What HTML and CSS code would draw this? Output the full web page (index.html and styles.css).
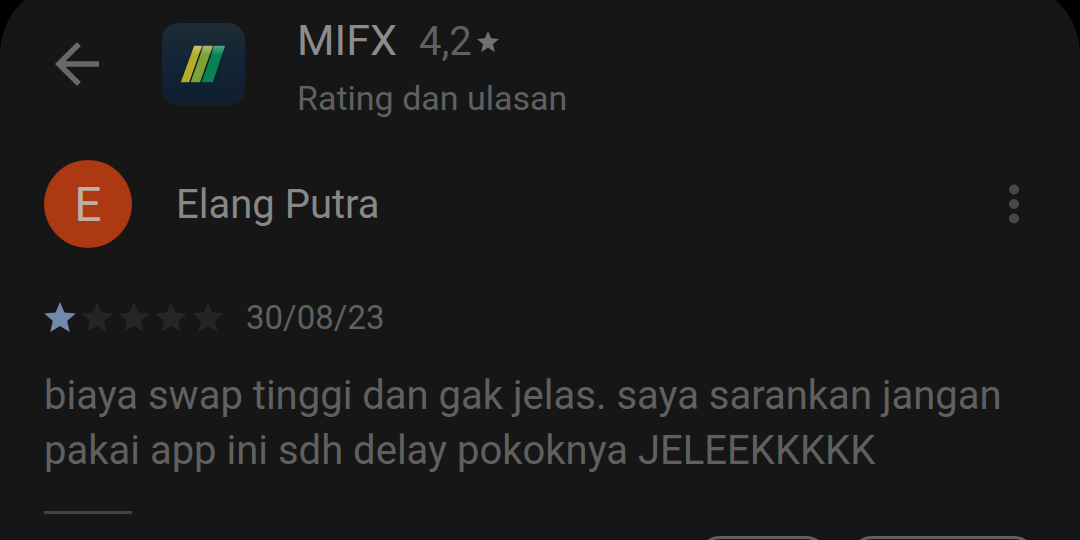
FILE: index.html
```
<!DOCTYPE html>
<html lang="id">
  <head>
    <meta charset="UTF-8" />
    <meta name="viewport" content="width=device-width, initial-scale=1.0" />
    <title>MIFX - Rating dan ulasan</title>
    <link rel="stylesheet" href="styles.css">
  </head>
  <body>
    <svg width="0" height="0" class="defs" aria-hidden="true">
      <symbol id="star" viewBox="2 2 20 19">
        <path d="M12 17.27L18.18 21l-1.64-7.03L22 9.24l-7.19-.61L12 2 9.19 8.63 2 9.24l5.46 4.73L5.82 21z" />
      </symbol>
    </svg>

    <div class="sheet">
      <!-- App bar -->
      <header class="app-bar">
        <button class="back" aria-label="Kembali">
          <svg width="44" height="44" viewBox="4 4 16 16" fill="#696969">
            <path d="M20 11H7.83l5.59-5.59L12 4l-8 8 8 8 1.41-1.41L7.83 13H20z" />
          </svg>
        </button>
        <svg class="app-icon" width="83" height="83" viewBox="0 0 84 84" aria-hidden="true">
          <defs>
            <linearGradient id="icon-bg" x1="0" y1="0" x2="0" y2="1">
              <stop offset="0" stop-color="#1d2c36" />
              <stop offset="0.5" stop-color="#122435" />
              <stop offset="1" stop-color="#101d2c" />
            </linearGradient>
            <linearGradient id="shine" x1="0" y1="0" x2="0" y2="1">
              <stop offset="0" stop-color="#fff" stop-opacity="0.3" />
              <stop offset="0.25" stop-color="#fff" stop-opacity="0" />
            </linearGradient>
          </defs>
          <rect width="84" height="84" rx="17" fill="url(#icon-bg)" />
          <path d="M32 22.500H65L53 60.500H18z" fill="#071b20" />
          <path d="M32.500 23H40.500L27.500 60H19z" fill="#b7ab2b" />
          <path d="M42 23H51.500L38.500 60H29z" fill="#7fa238" />
          <path d="M53 23H64L51.500 60H40z" fill="#078351" />
          <path d="M32.500 23H64L51.500 60H19z" fill="url(#shine)" />
        </svg>
        <div class="app-info">
          <div class="app-title">
            <h1>MIFX</h1>
            <span class="score">4,2<svg width="22" height="21"><use href="#star" /></svg></span>
          </div>
          <p>Rating dan ulasan</p>
        </div>
      </header>

      <!-- Review -->
      <article class="review">
        <div class="author">
          <span class="avatar" aria-hidden="true">E</span>
          <h2>Elang Putra</h2>
          <button class="more" aria-label="Opsi lainnya">
            <svg width="10" height="40" viewBox="0 0 10 40" fill="#484848">
              <circle cx="5" cy="5.500" r="5" />
              <circle cx="5" cy="20" r="5" />
              <circle cx="5" cy="34.500" r="5" />
            </svg>
          </button>
        </div>
        <div class="meta">
          <div class="stars" role="img" aria-label="1 dari 5 bintang">
            <svg class="on"><use href="#star" /></svg>
            <svg><use href="#star" /></svg>
            <svg><use href="#star" /></svg>
            <svg><use href="#star" /></svg>
            <svg><use href="#star" /></svg>
          </div>
          <time datetime="2023-08-30">30/08/23</time>
        </div>
        <p class="text">biaya swap tinggi dan gak jelas. saya sarankan jangan pakai app ini sdh delay pokoknya JELEEKKKKK</p>
        <hr>
        <div class="actions">
          <button class="yes" aria-label="Ya"></button>
          <button class="no" aria-label="Tidak"></button>
        </div>
      </article>
    </div>
  </body>
</html>
```
FILE: styles.css
```
* {
  box-sizing: border-box;
}

body {
  height: 100vh;
  margin: 0;
  overflow: hidden;
  background-color: #000;
  color: #606060;
  font-family: Roboto, "Liberation Sans", sans-serif;
}

h1,
h2,
p {
  margin: 0;
  font-weight: normal;
}

button {
  padding: 0;
  background: none;
  border: none;
  cursor: pointer;
}

svg {
  display: block;
  flex: none;
}

.defs {
  position: absolute;
}

/* The rounded top runs a little past the screen edge */
.sheet {
  margin-top: -18px;
  padding: 34px 44px 0;
  background-color: #161616;
  border-radius: 72px 72px 0 0;
}

/* App bar */
.app-bar {
  display: flex;
  align-items: center;
  height: 96px;
}

.back {
  margin: 0 63px 0 11px;
}

.app-icon {
  margin-right: 52px;
}

.app-info {
  padding-top: 9px;
}

.app-title {
  display: flex;
  align-items: baseline;
  gap: 22px;
  line-height: 48px;
}

h1 {
  color: #8c8c8c;
  font-size: 43px;
}

.score {
  display: flex;
  align-items: center;
  gap: 5px;
  font-size: 40px;
}

.score svg {
  fill: #707070;
}

.app-info p {
  font-size: 34px;
  line-height: 48px;
  padding-top: 8px;
}

/* Review */
.author {
  display: flex;
  align-items: center;
  margin-top: 48px;
}

.avatar {
  display: flex;
  align-items: center;
  justify-content: center;
  width: 88px;
  height: 88px;
  margin-right: 44px;
  border-radius: 50%;
  background-color: #ad3913;
  color: #c0ada5;
  font-size: 48px;
}

h2 {
  color: #888;
  font-size: 40px;
}

.more {
  margin: 0 17px 0 auto;
}

.meta {
  display: flex;
  align-items: center;
  gap: 22px;
  height: 40px;
  margin-top: 49px;
}

.stars {
  display: flex;
  gap: 5px;
}

.stars svg {
  width: 32px;
  height: 30px;
  fill: #242526;
}

.stars .on {
  fill: #7289ac;
}

time {
  font-size: 33px;
}

.text {
  margin-top: 31px;
  font-size: 40px;
  line-height: 55px;
}

hr {
  width: 88px;
  height: 3px;
  margin: 33px 0 22px;
  border: none;
  background-color: #434343;
}

.actions {
  display: flex;
  justify-content: flex-end;
  gap: 22px;
}

.actions button {
  height: 88px;
  border: 3px solid #606060;
  border-radius: 22px;
}

.yes {
  width: 130px;
}

.no {
  width: 186px;
}
```
